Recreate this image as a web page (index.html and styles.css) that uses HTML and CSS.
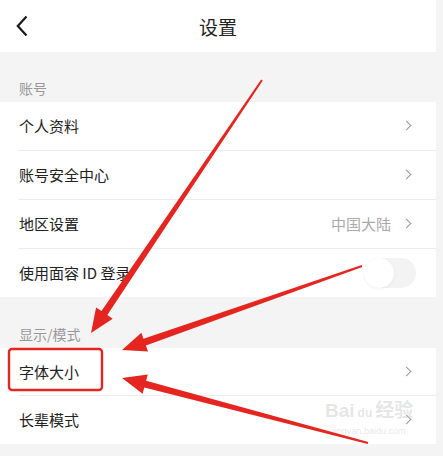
FILE: index.html
```html
<!DOCTYPE html>
<html lang="zh-CN">
<head>
    <meta charset="UTF-8">
    <meta name="viewport" content="width=device-width, initial-scale=1.0">
    <title>设置</title>
    <link rel="stylesheet" href="styles.css">
</head>
<body>

<div class="page">
    <header class="topbar">
        <span class="back">
            <svg width="12" height="22" viewBox="0 0 12 22"><path d="M10.5 1.5 L1.8 11 L10.5 20.5" fill="none" stroke="#1a1a1a" stroke-width="2.2"/></svg>
        </span>
        <h1 class="title">设置</h1>
        <span></span>
    </header>

    <div class="section-label">账号</div>
    <ul class="group">
        <li class="row"><span>个人资料</span><i class="chev"></i></li>
        <li class="row"><span>账号安全中心</span><i class="chev"></i></li>
        <li class="row"><span>地区设置</span><span class="value">中国大陆</span><i class="chev"></i></li>
        <li class="row"><span>使用面容 ID 登录</span><span class="switch"><span class="knob"></span></span></li>
    </ul>

    <div class="section-label second">显示/模式</div>
    <ul class="group compact">
        <li class="row"><span>字体大小</span><i class="chev"></i></li>
        <li class="row"><span>长辈模式</span><i class="chev"></i></li>
    </ul>
</div>

<!-- watermark + annotations drawn on top of the screenshot -->
<div class="watermark">
    <span class="wm-logo">Bai<span class="wm-paw">du</span>经验</span>
    <span class="wm-url">jingyan.baidu.com</span>
</div>

<svg class="marks" width="443" height="456" viewBox="0 0 443 456">
    <rect x="9" y="349" width="93" height="41" rx="3" fill="none" stroke="#e52620" stroke-width="2.4"/>
    <polygon fill="#e52620" points="262.8,80.6 107.3,315.1 112.7,318.7 91,333 96.1,307.5 101.5,311.1 261.2,79.4"/>
    <polygon fill="#e52620" points="362.3,266.9 145.9,345.4 148.0,351.5 122,350 141.4,332.7 143.5,338.8 361.7,265.1"/>
    <polygon fill="#e52620" points="368.3,442.0 146.1,380.7 147.8,374.4 122,378 142.6,393.8 144.3,387.5 367.7,444.0"/>
</svg>

</body>
</html>
```

FILE: styles.css
```css
body {
    margin: 0;
    background: #f4f4f4;
    font-family: "Noto Sans CJK SC", "Noto Sans", sans-serif;
    color: #222;
    width: 443px;
    height: 456px;
    overflow: hidden;
    position: relative;
}
.page {
    width: 436px;
}
.topbar {
    height: 52px;
    background: #fff;
    display: grid;
    grid-template-columns: 1fr auto 1fr;
    align-items: center;
}
.back {
    padding-left: 16px;
    display: flex;
}
.title {
    margin: 0;
    font-size: 19px;
    font-weight: normal;
    color: #222;
}
.section-label {
    height: 50px;
    box-sizing: border-box;
    display: flex;
    align-items: flex-end;
    padding: 0 0 4px 19px;
    font-size: 14px;
    color: #999;
}
.section-label.second {
    height: 51px;
    padding-bottom: 4px;
}
.group {
    list-style: none;
    margin: 0;
    padding: 0;
    background: #fff;
}
.row {
    margin-left: 18px;
    padding: 0 24px 1px 1px;
    box-sizing: border-box;
    height: 49px;
    display: flex;
    align-items: center;
    font-size: 15px;
    border-bottom: 1px solid #ececec;
}
.row:last-child {
    height: 48px;
    border-bottom: none;
}
.compact .row {
    height: 48px;
}
.row > span:first-child {
    flex: 1;
}
.value {
    color: #aaa;
    margin-right: 12px;
}
.chev {
    width: 6px;
    height: 6px;
    border-top: 1.4px solid #999;
    border-right: 1.4px solid #999;
    transform: rotate(45deg);
    margin-right: 2px;
}
.switch {
    width: 52px;
    height: 30px;
    border-radius: 15px;
    background: #f3f3f3;
    margin-right: -4px;
    display: flex;
    align-items: center;
}
.knob {
    width: 30px;
    height: 30px;
    border-radius: 50%;
    background: #fff;
    box-shadow: 0 1px 3px rgba(0, 0, 0, 0.06);
}
.watermark {
    position: absolute;
    left: 325px;
    top: 400px;
    display: flex;
    flex-direction: column;
    align-items: center;
    color: rgba(200, 200, 200, 0.45);
    font-family: "Liberation Sans", "Noto Sans CJK SC", sans-serif;
}
.wm-logo {
    font-size: 19px;
    font-weight: bold;
    line-height: 22px;
}
.wm-paw {
    font-size: 12px;
    margin: 0 3px;
}
.wm-url {
    font-size: 9px;
    line-height: 14px;
}
.marks {
    position: absolute;
    left: 0;
    top: 0;
    pointer-events: none;
}
```
